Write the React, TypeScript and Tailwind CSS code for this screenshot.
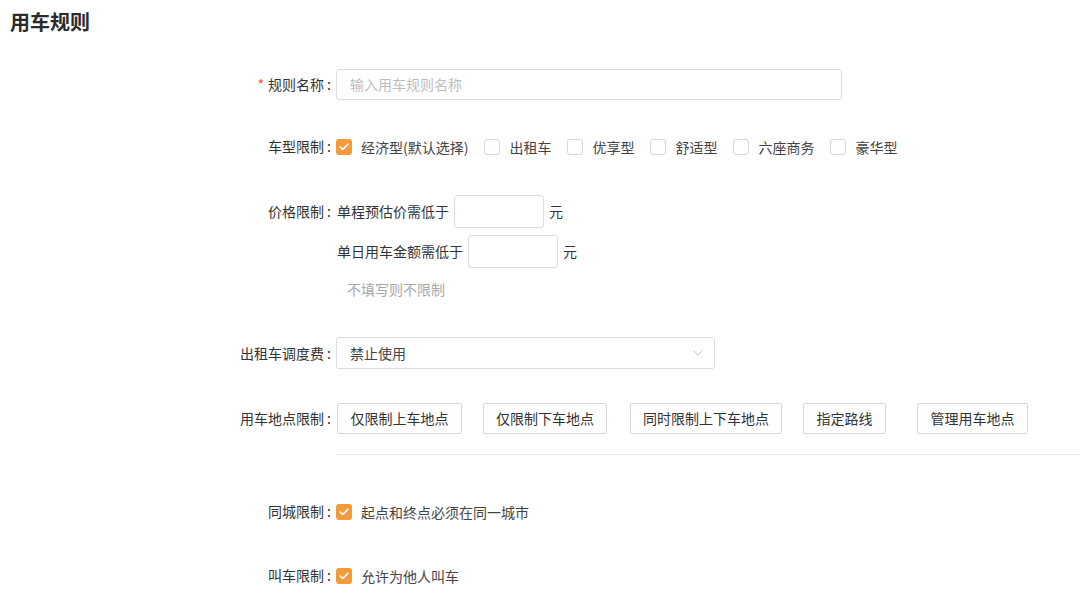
import React from "react";

const font = {
  fontFamily: '"Noto Sans CJK SC", "Noto Sans", sans-serif',
};

function Check({ checked }: { checked?: boolean }) {
  if (checked) {
    return (
      <span className="flex h-4 w-4 shrink-0 items-center justify-center rounded-[3px] bg-[#f39a3a]">
        <svg width="10" height="8" viewBox="0 0 10 8" fill="none">
          <path d="M1.2 4 L3.8 6.4 L8.8 1.4" stroke="#fff" strokeWidth="1.6" strokeLinecap="round" strokeLinejoin="round" />
        </svg>
      </span>
    );
  }
  return <span className="h-4 w-4 shrink-0 rounded-[3px] border border-[#d6d6d6] bg-white" />;
}

function Label({ children, required }: { children: React.ReactNode; required?: boolean }) {
  return (
    <div className="w-[331px] shrink-0 text-right text-[14px] text-[#333]">
      {required && <span className="mr-[4px] text-[#f04a3a]">*</span>}
      {children}
      <span className="ml-[3px]">:</span>
    </div>
  );
}

const carTypes = [
  { name: "经济型(默认选择)", checked: true },
  { name: "出租车" },
  { name: "优享型" },
  { name: "舒适型" },
  { name: "六座商务" },
  { name: "豪华型" },
];

const placeButtons = [
  { text: "仅限制上车地点", w: "w-[125px]", ml: "ml-0" },
  { text: "仅限制下车地点", w: "w-[124px]", ml: "ml-[21px]" },
  { text: "同时限制上下车地点", w: "w-[152px]", ml: "ml-[23px]" },
  { text: "指定路线", w: "w-[83px]", ml: "ml-[21px]" },
  { text: "管理用车地点", w: "w-[111px]", ml: "ml-[31px]" },
];

export default function App() {
  return (
    <div className="h-[595px] w-[1080px] overflow-hidden bg-white text-[#333]" style={font}>
      <h1 className="pl-[10px] pt-[8px] text-[20px] font-bold leading-[28px] text-[#2b2b2b]">用车规则</h1>

      <div className="mt-[33px] flex items-center">
        <Label required>规则名称</Label>
        <div className="ml-[5px] flex h-[31px] w-[506px] items-center rounded-[3px] border border-[#dcdcdc] px-[13px] text-[14px] text-[#bdbdbd]">
          输入用车规则名称
        </div>
      </div>

      <div className="mt-[36px] flex items-center">
        <Label>车型限制</Label>
        <div className="ml-[5px] flex items-center">
          {carTypes.map((c, i) => (
            <div key={c.name} className={`flex items-center ${i > 0 ? "ml-[16px]" : ""}`}>
              <Check checked={c.checked} />
              <span className="ml-[9px] text-[14px] leading-[20px] text-[#444]">{c.name}</span>
            </div>
          ))}
        </div>
      </div>

      <div className="mt-[38px] flex items-start">
        <div className="flex h-[33px] items-center">
          <Label>价格限制</Label>
        </div>
        <div className="ml-[6px] flex flex-col text-[14px] text-[#333]">
          <div className="flex items-center">
            <span>单程预估价需低于</span>
            <span className="ml-[5px] h-[33px] w-[90px] rounded-[3px] border border-[#dcdcdc]" />
            <span className="ml-[5px]">元</span>
          </div>
          <div className="mt-[7px] flex items-center">
            <span>单日用车金额需低于</span>
            <span className="ml-[5px] h-[33px] w-[90px] rounded-[3px] border border-[#dcdcdc]" />
            <span className="ml-[5px]">元</span>
          </div>
          <div className="mt-[11px] pl-[10px] leading-[20px] text-[#a8a8a8]">不填写则不限制</div>
        </div>
      </div>

      <div className="mt-[38px] flex items-center">
        <Label>出租车调度费</Label>
        <div className="ml-[5px] flex h-[32px] w-[379px] items-center justify-between rounded-[3px] border border-[#dcdcdc] pl-[13px] pr-[11px] text-[14px] text-[#444]">
          <span>禁止使用</span>
          <svg width="10" height="6" viewBox="0 0 10 6" fill="none">
            <path d="M0.8 0.8 L5 5 L9.2 0.8" stroke="#c4c4c4" strokeWidth="1" />
          </svg>
        </div>
      </div>

      <div className="mt-[34px] flex items-center">
        <Label>用车地点限制</Label>
        <div className="ml-[6px] flex items-center">
          {placeButtons.map((b) => (
            <div
              key={b.text}
              className={`flex h-[31px] items-center justify-center rounded-[2px] border border-[#d6d6d6] text-[14px] text-[#333] ${b.w} ${b.ml}`}
            >
              {b.text}
            </div>
          ))}
        </div>
      </div>

      <div className="ml-[336px] mt-[20px] h-px bg-[#e6e6e6]" />

      <div className="mt-[46px] flex items-center">
        <Label>同城限制</Label>
        <div className="ml-[5px] flex items-center">
          <Check checked />
          <span className="ml-[9px] text-[14px] leading-[20px] text-[#444]">起点和终点必须在同一城市</span>
        </div>
      </div>

      <div className="mt-[43px] flex items-center">
        <Label>叫车限制</Label>
        <div className="ml-[5px] flex items-center">
          <Check checked />
          <span className="ml-[9px] text-[14px] leading-[20px] text-[#444]">允许为他人叫车</span>
        </div>
      </div>
    </div>
  );
}
